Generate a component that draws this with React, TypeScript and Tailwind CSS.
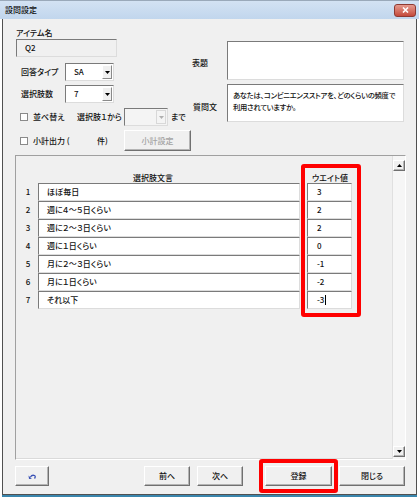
import React from "react";

const sunken =
  "border border-t-[#7a7a7a] border-l-[#7a7a7a] border-b-[#dcdcdc] border-r-[#dcdcdc]";
const raised =
  "border border-t-[#ffffff] border-l-[#ffffff] border-b-[#707070] border-r-[#707070] shadow-[inset_-1px_-1px_0_#b4b4b4] bg-[#f0f0f0]";

function DownTri({ color = "#000" }: { color?: string }) {
  return (
    <svg width="5" height="3" viewBox="0 0 5 3">
      <path d="M0 0 L5 0 L2.5 3 Z" fill={color} />
    </svg>
  );
}

function Combo({ value, width, disabled }: { value: string; width: number; disabled?: boolean }) {
  return (
    <div
      className={`${sunken} h-[18px] flex items-stretch ${disabled ? "bg-[#f4f4f4]" : "bg-white"}`}
      style={{ width }}
    >
      <div className="flex-1 flex items-center pl-[8px]">{value}</div>
      <div
        className={`w-[10px] my-[1px] mr-[1px] flex items-center justify-center ${
          disabled
            ? "border border-[#d8d8d8] bg-[#f4f4f4]"
            : "border border-t-[#ffffff] border-l-[#ffffff] border-b-[#8a8a8a] border-r-[#8a8a8a] bg-[#f0f0f0]"
        }`}
      >
        <DownTri color={disabled ? "#b0b0b0" : "#000"} />
      </div>
    </div>
  );
}

function Check() {
  return <div className="w-[8px] h-[8px] border border-[#8a8a8a] bg-white" />;
}

const rows = [
  ["ほぼ毎日", "3"],
  ["週に４～５日くらい", "2"],
  ["週に２～３日くらい", "2"],
  ["週に１日くらい", "0"],
  ["月に２～３日くらい", "-1"],
  ["月に１日くらい", "-2"],
  ["それ以下", "-3"],
];

export default function App() {
  return (
    <div
      className="w-[419px] h-[501px] bg-white relative text-[8px] leading-[10px] font-medium text-[#111] [font-feature-settings:'palt']"
      style={{ fontFamily: '"Noto Sans CJK JP", "Noto Sans", sans-serif' }}
    >
      {/* title bar */}
      <div className="h-[19px] flex items-center justify-between bg-gradient-to-b from-[#d3e2f3] to-[#c1d6ed] border-t border-[#9aa9ba]">
        <div className="pl-[5px] text-[8px]">設問設定</div>
        <div className="mr-[3px] w-[22px] h-[13px] rounded-[3px] border border-[#8e3a32] bg-gradient-to-b from-[#e59a8f] to-[#c4493b] flex items-center justify-center">
          <svg width="7" height="6" viewBox="0 0 7 6">
            <path d="M1 0.5 L6 5.5 M6 0.5 L1 5.5" stroke="#fff" strokeWidth="1.6" />
          </svg>
        </div>
      </div>

      {/* window body */}
      <div className="ml-[2px] w-[415px] h-[476px] bg-[#f0f0f0] border-l border-r border-b border-[#505050] flex flex-col">
        {/* top section */}
        <div className="h-[136px] flex">
          {/* left column */}
          <div className="w-[189px] pl-[13px] flex flex-col">
            <div className="mt-[8px] h-[12px] leading-[12px]">アイテム名</div>
            <div className={`${sunken} w-[101px] h-[18px] bg-[#f0f0f0] flex items-center pl-[8px]`}>Q2</div>

            <div className="mt-[6px] h-[18px] flex items-center">
              <div className="ml-[5px] w-[44px]">回答タイプ</div>
              <Combo value="SA" width={49} />
            </div>
            <div className="mt-[4px] h-[18px] flex items-center">
              <div className="ml-[5px] w-[44px]">選択肢数</div>
              <Combo value="7" width={49} />
            </div>
            <div className="mt-[5px] h-[18px] flex items-center">
              <div className="ml-[4px] w-[13px]">
                <Check />
              </div>
              <div className="w-[44px]">並べ替え</div>
              <div className="w-[47px]">選択肢１から</div>
              <Combo value="" width={44} disabled />
              <div className="ml-[3px]">まで</div>
            </div>
            <div className="mt-[4px] h-[21px] flex items-center">
              <div className="ml-[4px] w-[13px]">
                <Check />
              </div>
              <div className="w-[64px]">小計出力 (</div>
              <div className="w-[27px]">件)</div>
              <div className={`${raised} w-[67px] h-[21px] flex items-center justify-center text-[#a3a3a3]`}>
                小計設定
              </div>
            </div>
          </div>

          {/* right column */}
          <div className="flex flex-col">
            <div className="mt-[22px] flex items-center">
              <div className="w-[35px] pt-[5px]">表題</div>
              <div className={`${sunken} w-[177px] h-[39px] bg-white`} />
            </div>
            <div className="mt-[4px] flex items-center">
              <div className="w-[35px] pt-[8px] pl-[1px]">質問文</div>
              <div className={`${sunken} w-[177px] h-[38px] bg-white pl-[5px] pt-[4px] leading-[12px] text-[7.3px] tracking-[-0.25px] whitespace-nowrap overflow-hidden`}>
                あなたは、コンビニエンスストアを、どのくらいの頻度で
                <br />
                利用されていますか。
              </div>
            </div>
          </div>
        </div>

        {/* list panel */}
        <div className="ml-[12px] w-[391px] h-[305px] border border-t-[#a0a0a0] border-l-[#a0a0a0] border-b-[#ffffff] border-r-[#ffffff] shadow-[inset_-1px_-1px_0_#dadada] flex">
          <div className="flex-1 flex flex-col">
            <div className="mt-[17px] h-[10px] flex">
              <div className="w-[22px]" />
              <div className="w-[262px] pl-[95px]">選択肢文言</div>
              <div className="w-[7px]" />
              <div className="pl-[5px]">ウエイト値</div>
            </div>
            <div className="flex flex-col">
              {rows.map(([t, w], i) => (
                <div key={i} className="h-[18px] flex items-stretch">
                  <div className="w-[22px] flex items-center justify-center pl-[2px]">{i + 1}</div>
                  <div className={`${sunken} w-[262px] bg-white flex items-center pl-[8px]`}>{t}</div>
                  <div className="w-[7px]" />
                  <div className={`${sunken} w-[45px] bg-white flex items-center pl-[9px]`}>
                    {w}
                    {i === 6 && <span className="ml-[0.5px] w-[1px] h-[10px] bg-black inline-block" />}
                  </div>
                </div>
              ))}
            </div>
          </div>
          {/* scrollbar */}
          <div className="w-[13px] border-l border-[#e0e0e0] bg-[#f6f6f6] flex flex-col justify-between pt-[4px] pb-[2px]">
            <div className={`${raised} w-[12px] h-[11px] flex items-center justify-center`}>
              <svg width="5" height="3" viewBox="0 0 5 3">
                <path d="M0 3 L5 3 L2.5 0 Z" fill="#000" />
              </svg>
            </div>
            <div className={`${raised} w-[12px] h-[11px] flex items-center justify-center`}>
              <DownTri />
            </div>
          </div>
        </div>

        {/* bottom buttons */}
        <div className="mt-[6px] flex items-center">
          <div className={`${raised} ml-[12px] w-[34px] h-[20px] flex items-center justify-center`}>
            <svg width="9" height="7" viewBox="0 0 9 7">
              <path d="M2.5 4 Q4 1.5 6.5 2.5 Q8 3.5 6.5 5.5" stroke="#3b52b5" strokeWidth="1.3" fill="none" />
              <path d="M0.5 2.5 L3.8 5.8 L1 6 Z" fill="#3b52b5" />
            </svg>
          </div>
          <div className={`${raised} ml-[95px] w-[46px] h-[20px] flex items-center justify-center`}>前へ</div>
          <div className={`${raised} ml-[7px] w-[46px] h-[20px] flex items-center justify-center`}>次へ</div>
          <div className={`${raised} ml-[22px] w-[67px] h-[20px] flex items-center justify-center`}>登録</div>
          <div className={`${raised} ml-[7px] w-[66px] h-[20px] flex items-center justify-center`}>閉じる</div>
        </div>
      </div>
      <div className="ml-[2px] w-[415px] h-[2px] bg-[#3a86ad]" />

      {/* red highlights */}
      <div className="absolute left-[301px] top-[164px] w-[60px] h-[153px] border-[4px] border-[#ff0000] rounded-[3px]" />
      <div className="absolute left-[259px] top-[459px] w-[79px] h-[34px] border-[4px] border-[#ff0000] rounded-[3px]" />
    </div>
  );
}
